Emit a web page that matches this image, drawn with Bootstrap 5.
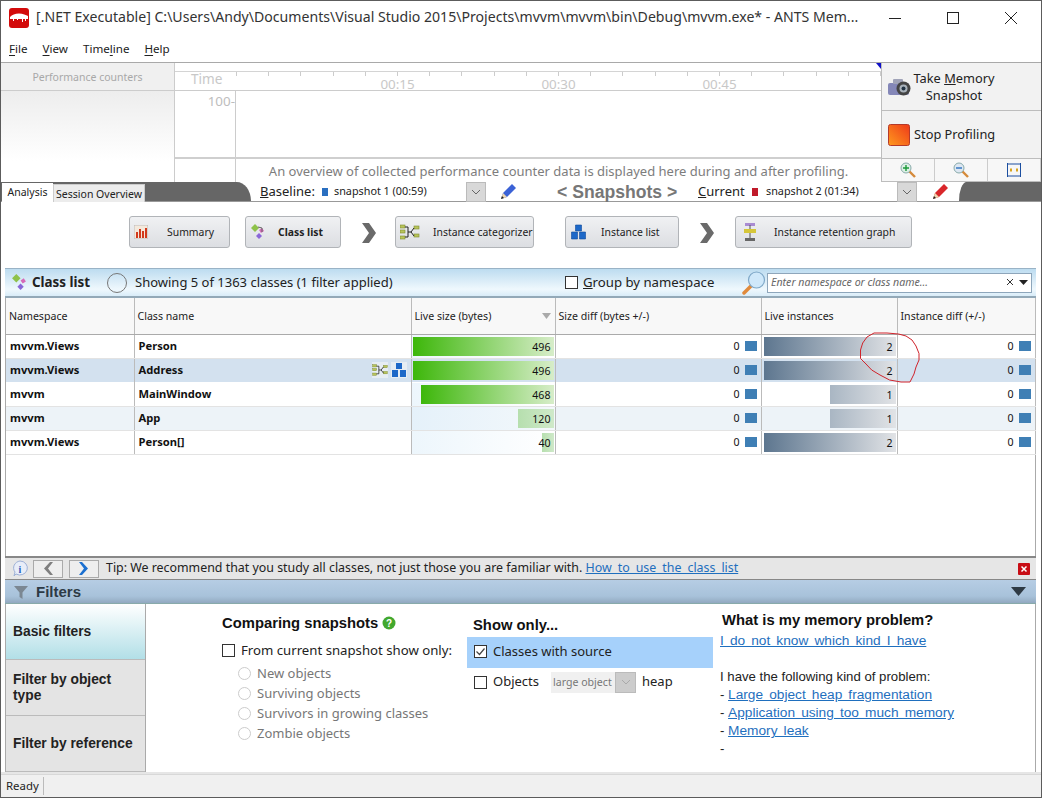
<!DOCTYPE html>
<html lang="en">
<head>
<meta charset="utf-8">
<title>ANTS Memory Profiler</title>
<link rel="stylesheet" href="https://cdn.jsdelivr.net/npm/bootstrap@5.3.0/dist/css/bootstrap.min.css">
<style>
html,body{margin:0;height:100%;background:#fff;overflow:hidden}
body{font-family:"Noto Sans","Open Sans",sans-serif;color:#222;font-size:13px;line-height:1.2}
.app-win{width:1042px;height:798px;border:1px solid #5c5c5c;position:relative;overflow:hidden;background:#fff}
.app-win>*{flex:none}
.title-bar{height:33px;padding-left:8px}
.title-text{font-size:14.1px;margin-left:7px;white-space:nowrap;width:830px;color:#333;flex:none}
.win-ctl{width:58px;text-align:center;flex:none}
.menu-bar{height:29px;padding:0 0 6px 8px;gap:15px;font-size:11.6px;color:#222;border-bottom:1px solid #a9a9a9;align-items:flex-end}
.menu-bar u{text-underline-offset:2px}
.top-panel{height:119px}
.pc-side{width:174px;flex:none;border-right:1px solid #ccc}
.pc-head{height:28px;background:#f0f0f0;border-bottom:1px solid #ccc;color:#a8a8a8;font-size:10.5px;padding-top:2px}
.pc-fill{height:70px;background:linear-gradient(#ededed,#fff)}
.chart-zone{flex:1 1 auto;min-width:0;position:relative}
.ruler-row{height:28px;border-bottom:1px solid #ccc;padding-top:8px}
.ruler-time{width:60px;flex:none;border-top:1px solid #d4d4d4;color:#c8c8c8;font-size:13.6px;padding:0 0 0 16px;line-height:13px}
.ruler-scale{flex:1 1 auto;border-top:1px solid #d4d4d4;background:repeating-linear-gradient(90deg,#ccc 0 1px,transparent 1px 32.2px) 1px 0/100% 4px no-repeat;padding-left:82px;color:#c8c8c8;font-size:13.4px;line-height:11px}
.ruler-lab{width:161px;flex:none;padding-top:7px;text-align:center}
.plot-row{height:66px}
.plot-y{width:61px;text-align:right;color:#bdbdbd;font-size:13.4px;padding-top:2px;line-height:16px;border-right:1px solid #ccc}
.chart-note{height:25px;border-top:2px solid #cfcfcf}
.note-gut{width:61px;flex:none;border-right:1px solid #ccc}
.note-text{flex:1 1 auto;text-align:center;color:#7d7d7d;font-size:13px;line-height:16px;padding-top:4px;white-space:nowrap}
.action-col{width:160px;flex:none;border-left:1px solid #bdbdbd;background:#f2f2f2;color:#222}
.act-btn{border-bottom:1px solid #bdbdbd;font-size:12.8px;padding-left:6px;line-height:17px;height:48px}
.act-text{width:84px;white-space:nowrap}
.act-zoom{height:23px;background:#f7f7f7;border-bottom:1px solid #bdbdbd}
.act-zoom>div{flex:1 1 0;border-right:1px solid #ccc}
.marker{position:absolute;left:875px;top:62px;width:0;height:0;border-top:6px solid #1010c8;border-left:5px solid transparent}
.snap-strip{height:20px;background:#fff;border-bottom:1px solid #999}
.strip-left{width:235px;flex:none;background:#666}
.curve-l{width:15px;flex:none;background:#666;border-top-right-radius:15px 20px}
.curve-r{flex:1 1 auto;background:#666;border-top-left-radius:8px 20px}
.tab-on,.tab-off{font-size:10.5px;text-align:center;white-space:nowrap;flex:none}
.tab-on{width:51px;background:#fff;padding-top:3px;margin-top:1px;height:19px;margin-left:1px}
.tab-off{width:92px;background:#ececec;border:1px solid #ccc;border-bottom:0;padding-top:3px;margin-top:2px;height:18px}
.snap-mid{width:708px;background:#fff;flex:none}
.snap-lab{font-size:13px;color:#222;flex:none;white-space:nowrap}
.snap-val{font-size:10.8px;white-space:nowrap;flex:none}
.snap-drop{width:20px;height:20px;background:#d8d8d8;border:1px solid #bbb;flex:none}
.snap-title{font-family:"Liberation Sans",sans-serif;font-weight:700;font-size:17.6px;line-height:18px;color:#777;white-space:nowrap;width:121px;margin-left:40px;flex:none}
.main-zone{padding:0 5px 0 4px}
.step-row{height:66px;padding-top:14px;padding-left:124px}
.step-btn{height:32px;background:linear-gradient(#f0f1f3,#dcdee2);border:1px solid #b1b4b8;border-radius:3px;font-size:10.4px;color:#222;padding:0 4px;flex:none}
.step-ico{width:33px;flex:none;display:flex;align-items:center}
.step-ico-s{width:28px}
.step-lab{white-space:nowrap}
.step-arrow{flex:none;margin-top:7px}
.list-head{height:30px;background:linear-gradient(#bddcf0,#eff8fd 75%,#d9ecf8);border-top:1px solid #9ab3c6;border-bottom:2px solid #93a9b8;padding-left:6px;width:1031px}
.list-title{font-size:13.4px;font-weight:700;margin-left:4px;width:66px;white-space:nowrap;color:#222;flex:none}
.list-info{font-size:13px;white-space:nowrap;margin-left:8px;width:430px;flex:none}
.spin-ring{width:20px;height:20px;border:1px solid #777;border-radius:50%;flex:none;margin-left:9px}
.group-lab{font-size:13.2px;white-space:nowrap;margin-left:5px;width:159px;flex:none}
.flat-check{width:13px!important;height:13px!important;margin:0!important;border:1px solid #333!important;border-radius:0!important;flex:none;float:none!important;box-shadow:none!important}
.flat-check:checked{background-color:#fff!important;background-image:url("data:image/svg+xml,%3csvg xmlns='http://www.w3.org/2000/svg' viewBox='0 0 13 13'%3e%3cpath d='M2.5 6.5l3 3 5-6' fill='none' stroke='%23444' stroke-width='1.2'/%3e%3c/svg%3e")!important;background-size:13px!important}
.flat-radio{width:13px!important;height:13px!important;margin:0!important;border:1px solid #ccc!important;opacity:1!important;flex:none;float:none!important;background:#fff}
.search-box{width:265px;flex:none;height:20px;background:#fff;border:1px solid #8ea6bb;font-size:10.6px;font-style:italic;color:#666;padding:0 3px;margin-left:1px}
.grid-wrap{width:1031px;height:258px;border-left:1px solid #aaa;border-right:1px solid #aaa;position:relative}
.data-grid{table-layout:fixed;width:1029px;border-collapse:collapse;margin:0;font-size:11px}
.data-grid th{font-weight:400;height:36px;background:#f8f8f8;border-bottom:1px solid #aaa;border-right:1px solid #bbb;padding:1px 0 0 3px;font-size:10.6px;color:#222;white-space:nowrap;vertical-align:middle}
.data-grid td{height:24px;padding:0;border:0;border-bottom:1px solid #e3e3e3;border-right:1px solid #bbb;vertical-align:middle;white-space:nowrap;color:#111}
.data-grid tr.row-sel td{background:#d3e1ef;border-top:1px dotted #fff;border-bottom:1px dotted #fff}
.data-grid tr.row-alt td{background:#edf3f8}
.txt-cell{font-weight:700;padding-left:4px!important;font-size:11.2px}
.cell-in{height:23px;padding:2px 1px;position:relative}
.bar-fill{height:19px;flex:none}
.cell-size{background:linear-gradient(90deg,#edf6fc,#fff)}
.row-alt .cell-size{background:linear-gradient(90deg,#e5f1fa,#f3f8fb)}
.bar-green{background:linear-gradient(90deg,#3db70a,#d7edc9)}
.bar-slate{background:linear-gradient(90deg,#5d768f,#e1e3e6)}
.bar-soft{background:linear-gradient(90deg,#a9b6c3,#e1e3e6)}
.bar-pale{background:linear-gradient(90deg,#b6dfae,#cfe9c9)}
.bar-num{position:absolute;right:4px;top:4px;font-size:10.6px;line-height:16px}
.num-wrap{padding-right:4px;gap:5px;font-size:10.6px}
.mini-sq{width:12px;height:10px;background:#3f7fb5;flex:none}
.row-icons{gap:3px;padding-right:4px}
.row-icons svg{background:#e6edf3}
.red-loop{position:absolute;left:853px;top:34px;pointer-events:none}
.tip-bar{height:24px;background:#e6e6e6;border-top:2px solid #888;border-bottom:1px solid #888;padding-left:6px;width:1031px;white-space:nowrap}
.nav-sq{width:30px;height:18px;background:#eee;border:1px solid #aaa;flex:none;margin-right:6px}
.tip-msg{margin-left:1px;width:912px;font-size:12.4px;color:#222;flex:none}
.tip-msg a,.help-col a{color:#1f6fbe;word-spacing:2.8px;text-decoration:underline}
.filter-head{height:24px;background:linear-gradient(#b6cde4,#a8c2da 70%,#92a9c0);border-bottom:1px solid #8aa;width:1031px;padding:0 9px 0 9px;font-family:"Liberation Sans",sans-serif;font-weight:700;font-size:15px;color:#2d3a45}
.filter-body{height:168px;width:1031px;border-left:1px solid #aaa;border-right:1px solid #aaa}
.filter-tabs{width:140px;flex:none;border-right:1px solid #aaa;font-family:"Liberation Sans",sans-serif;font-weight:700;font-size:13.8px;color:#222;line-height:16px}
.ftab{height:56px;background:#e4e4e4;border-bottom:1px solid #bbb;padding-left:7px}
.ftab-on{background:linear-gradient(#fff,#b2dfe7)}
.fcols{padding-left:76px}
.fcol1{width:245px;flex:none;padding-top:10px}
.fcol2{width:246px;flex:none;padding-top:12px}
.fcol3{width:310px;flex:none;padding:7px 0 0 7px;font-family:"Liberation Sans",sans-serif;font-size:13.2px;line-height:18px}
.fhead{font-family:"Liberation Sans",sans-serif;font-weight:700;font-size:14.8px;color:#111;white-space:nowrap;line-height:18px}
.fline{font-size:13.2px;white-space:nowrap;gap:6px;color:#222}
.fradio{height:20px;gap:6px;padding-left:16px;color:#777;font-size:13px;white-space:nowrap}
.src-pick{background:#a6d1fb;height:31px;padding:0 0 2px 7px;gap:6px;margin-top:3px;font-size:13px}
.heap-line{height:28px;padding-left:7px;gap:6px;font-size:13px}
.heap-sel{width:85px;height:21px;background:#f0f0f0;font-size:10.6px;color:#777;padding-left:2px;margin:0 0 0 6px;flex:none}
.heap-sel i{display:flex;width:21px;height:21px;margin-left:auto;background:#ccc;border:1px solid #bbb;align-items:center;justify-content:center}
.help-list{margin-top:18px}
.help-col a{font-size:13.7px;word-spacing:2.3px}
.status-bar{height:23px;background:#f0f0f0;border-top:1px solid #d8d8d8;position:absolute;left:0;right:0;bottom:0;font-size:11.4px;padding-left:5px;box-shadow:0 -2px 0 #e6e6e6}
.status-cell{border-right:1px solid #bbb;width:38px;height:18px;line-height:18px}
</style>
</head>
<body>
<div class="app-win d-flex flex-column">

  <div class="title-bar d-flex align-items-center">
    <svg width="20" height="20" viewBox="0 0 20 20"><rect width="20" height="20" rx="3" fill="#d30b0b"/><path d="M1 9C3 7 6 5.500 10 5.500S17 7 19 8v3h-2v2h-1v-2h-2v3h-1v-3H9v1H8v-1H5v2H4v-2H1z" fill="#fff"/></svg>
    <div class="title-text">[.NET Executable] C:\Users\Andy\Documents\Visual Studio 2015\Projects\mvvm\mvvm\bin\Debug\mvvm.exe* - ANTS Mem...</div>
    <div class="win-ctl"><svg width="14" height="14"><path d="M1 7.500h12" stroke="#222"/></svg></div>
    <div class="win-ctl"><svg width="13" height="13"><rect x=".5" y=".5" width="11" height="11" fill="none" stroke="#222"/></svg></div>
    <div class="win-ctl"><svg width="14" height="14"><path d="M1 1l12 12M13 1L1 13" stroke="#222"/></svg></div>
  </div>

  <div class="menu-bar d-flex">
    <span><u>F</u>ile</span><span><u>V</u>iew</span><span>Time<u>l</u>ine</span><span><u>H</u>elp</span>
  </div>

  <div class="top-panel d-flex">
    <div class="pc-side">
      <div class="pc-head text-center d-flex align-items-center justify-content-center">Performance counters</div>
      <div class="pc-fill"></div>
    </div>
    <div class="chart-zone d-flex flex-column">
      <div class="ruler-row d-flex">
        <div class="ruler-time">Time</div>
        <div class="ruler-scale d-flex">
          <span class="ruler-lab">00:15</span><span class="ruler-lab">00:30</span><span class="ruler-lab">00:45</span>
        </div>
      </div>
      <div class="plot-row d-flex"><div class="plot-y">100-</div></div>
      <div class="chart-note d-flex">
        <div class="note-gut"></div>
        <div class="note-text">An overview of collected performance counter data is displayed here during and after profiling.</div>
      </div>
    </div>
    <div class="action-col d-flex flex-column">
      <div class="act-btn d-flex align-items-center">
        <svg width="24" height="20" viewBox="0 0 24 20" class="flex-shrink-0"><rect x="0" y="6" width="21" height="12" rx="2" fill="#8487b8"/><rect x="5" y="2" width="10" height="5" rx="1" fill="#a0a3b8"/><circle cx="15.500" cy="11.500" r="7" fill="#444"/><circle cx="15.500" cy="11.500" r="4" fill="#a9b2bb"/><circle cx="15.500" cy="11.500" r="2" fill="#234"/></svg>
        <div class="act-text text-center">Take <u>M</u>emory<br>Snapshot</div>
      </div>
      <div class="act-btn d-flex align-items-center">
        <svg width="22" height="22" viewBox="0 0 22 22" class="flex-shrink-0"><defs><linearGradient id="stopg" x1="1" y1="0" x2="0" y2="1"><stop offset="0" stop-color="#ee3a1a"/><stop offset="1" stop-color="#ff9a1e"/></linearGradient></defs><rect x=".5" y=".5" width="21" height="21" rx="2" fill="url(#stopg)" stroke="#b53a2a"/></svg>
        <div class="ms-1">Stop Profiling</div>
      </div>
      <div class="act-zoom d-flex">
        <div class="d-flex align-items-center justify-content-center"><svg width="16" height="16" viewBox="0 0 16 16"><path d="M9 9l6 6" stroke="#d58a3a" stroke-width="2.400"/><circle cx="6" cy="6" r="5" fill="#dcefe4" stroke="#8aa"/><path d="M3 6h6M6 3v6" stroke="#1b9a3a" stroke-width="1.400"/></svg></div>
        <div class="d-flex align-items-center justify-content-center"><svg width="16" height="16" viewBox="0 0 16 16"><path d="M9 9l6 6" stroke="#d58a3a" stroke-width="2.400"/><circle cx="6" cy="6" r="5" fill="#dde7f2" stroke="#8aa"/><path d="M3 6h6" stroke="#2a70c0" stroke-width="1.400"/></svg></div>
        <div class="d-flex align-items-center justify-content-center"><svg width="14" height="14" viewBox="0 0 14 14"><path d="M.5 0v14M13.500 0v14M.5 1h13M.5 13h13" stroke="#1c4fa0" fill="none"/><path d="M3 7h2M9 7h2" stroke="#d9a520" stroke-width="3"/></svg></div>
      </div>
    </div>
  </div>
  <div class="marker"></div>

  <div class="snap-strip d-flex">
    <div class="strip-left d-flex">
      <div class="tab-on">Analysis</div>
      <div class="tab-off">Session Overview</div>
    </div>
    <div class="curve-l"></div>
    <div class="snap-mid d-flex align-items-center">
      <span class="snap-lab" style="margin-left:9px;width:62px"><u>B</u>aseline:</span>
      <svg width="6" height="8" class="flex-shrink-0"><rect width="6" height="8" fill="#2a6fc0"/></svg>
      <span class="snap-val" style="width:132px;margin-left:6px">snapshot 1 (00:59)</span>
      <span class="snap-drop d-flex align-items-center justify-content-center"><svg width="10" height="6"><path d="M1 1l4 4 4-4" fill="none" stroke="#666"/></svg></span>
      <svg style="margin-left:13px" class="flex-shrink-0" width="18" height="18" viewBox="0 0 18 18"><path d="M2 16l2-6L13 1l4 4-9 9z" fill="#3b62d6"/><path d="M2 16l2-6 4 4z" fill="#eed7b0"/><path d="M2 16l1-3 2 2z" fill="#222"/></svg>
      <span class="snap-title">&lt; Snapshots &gt;</span>
      <span class="snap-lab" style="margin-left:20px;width:54px"><u>C</u>urrent</span>
      <svg width="6" height="8" class="flex-shrink-0"><rect width="6" height="8" fill="#c01a2a"/></svg>
      <span class="snap-val" style="width:131px;margin-left:8px">snapshot 2 (01:34)</span>
      <span class="snap-drop d-flex align-items-center justify-content-center"><svg width="10" height="6"><path d="M1 1l4 4 4-4" fill="none" stroke="#666"/></svg></span>
      <svg style="margin-left:14px" class="flex-shrink-0" width="18" height="18" viewBox="0 0 18 18"><path d="M2 16l2-6L13 1l4 4-9 9z" fill="#d9262a"/><path d="M2 16l2-6 4 4z" fill="#eed7b0"/><path d="M2 16l1-3 2 2z" fill="#222"/></svg>
    </div>
    <div class="curve-r"></div>
  </div>

  <div class="main-zone">
    <div class="step-row d-flex align-items-start">
      <div class="step-btn d-flex align-items-center" style="width:101px">
        <span class="step-ico"><svg width="14" height="14" viewBox="0 0 14 14"><rect width="14" height="14" fill="#f4e9dc" stroke="#bbb"/><path d="M3 13V7M6 13V4M9 13V6M12 13V3" stroke="#d23a1c" stroke-width="2"/></svg></span>
        <span class="step-lab">Summary</span>
      </div>
      <div class="step-btn d-flex align-items-center fw-bold" style="width:96px;margin-left:15px">
        <span class="step-ico step-ico-s"><svg width="16" height="16" viewBox="0 0 16 16"><path d="M1 4l4-4 4 4-4 4z" fill="#8ec24a"/><path d="M9 6l3-2 2 3-3 2z" fill="#d66ab8"/><path d="M6 12l3-3 3 3-3 3z" fill="#8a67d8"/><path d="M8 3l4 1v4" fill="none" stroke="#666"/></svg></span>
        <span class="step-lab">Class list</span>
      </div>
      <svg class="step-arrow" style="margin-left:20px;margin-right:18px" width="16" height="20" viewBox="0 0 16 20"><path d="M1 0l7 0 7 10-7 10H1l7-10z" fill="#6a6a6a"/></svg>
      <div class="step-btn d-flex align-items-center" style="width:139px">
        <span class="step-ico"><svg width="20" height="16" viewBox="0 0 20 16"><g fill="#b8c45a" stroke="#7d8a30" stroke-width=".6"><rect y="1" width="5" height="3"/><rect y="6" width="5" height="3"/><rect y="12" width="5" height="3"/><rect x="14" y="2" width="5" height="3"/><rect x="14" y="10" width="5" height="3"/></g><path d="M5 3h3v10H5M8 8h3M11 8l3-4M11 8l3 4" fill="none" stroke="#222"/></svg></span>
        <span class="step-lab">Instance categorizer</span>
      </div>
      <div class="step-btn d-flex align-items-center" style="width:114px;margin-left:31px">
        <span class="step-ico" style="width:31px"><svg width="17" height="16" viewBox="0 0 16 16"><path d="M5 1h6v6H5zM1 8h6v7H1zM9 8h6v7H9z" fill="#1d68c8" stroke="#0f4a9c" stroke-width=".6"/></svg></span>
        <span class="step-lab">Instance list</span>
      </div>
      <svg class="step-arrow" style="margin-left:20px;margin-right:20px" width="16" height="20" viewBox="0 0 16 20"><path d="M1 0l7 0 7 10-7 10H1l7-10z" fill="#6a6a6a"/></svg>
      <div class="step-btn d-flex align-items-center" style="width:177px">
        <span class="step-ico ps-1" style="width:34px"><svg width="12" height="18" viewBox="0 0 12 18"><rect x="1" width="10" height="3" fill="#a98bd2"/><path d="M6 2v14" stroke="#555"/><rect y="6" width="12" height="4" fill="#d5c63a"/><rect x="1" y="15" width="10" height="3" fill="#666"/></svg></span>
        <span class="step-lab">Instance retention graph</span>
      </div>
    </div>

    <div class="list-head d-flex align-items-center">
      <svg class="flex-shrink-0" width="17" height="17" viewBox="0 0 16 16"><path d="M1 4l4-4 4 4-4 4z" fill="#8ec24a"/><path d="M9 6l3-2 2 3-3 2z" fill="#d66ab8"/><path d="M6 12l3-3 3 3-3 3z" fill="#8a67d8"/></svg>
      <span class="list-title">Class list</span>
      <span class="spin-ring"></span>
      <span class="list-info">Showing 5 of 1363 classes (1 filter applied)</span>
      <input class="form-check-input flat-check" type="checkbox" aria-label="Group by namespace">
      <span class="group-lab"><u>G</u>roup by namespace</span>
      <svg class="flex-shrink-0" width="24" height="24" viewBox="0 0 24 24"><path d="M10 14l-8 8" stroke="#e08a3c" stroke-width="3.500" stroke-linecap="round"/><circle cx="14.500" cy="9" r="8" fill="#cfe8fa" stroke="#7fa8c8" stroke-width="1.200"/></svg>
      <div class="search-box d-flex align-items-center">
        <span class="flex-grow-1">Enter namespace or class name...</span>
        <svg width="9" height="9"><path d="M1 1l6 6M7 1L1 7" stroke="#333"/></svg>
        <svg class="ms-1" width="9" height="5"><path d="M0 0h9L4.500 5z" fill="#222"/></svg>
      </div>
    </div>

    <div class="grid-wrap">
      <table class="data-grid">
        <colgroup><col style="width:128px"><col style="width:277px"><col style="width:144px"><col style="width:206px"><col style="width:136px"><col style="width:138px"></colgroup>
        <thead><tr>
          <th>Namespace</th><th>Class name</th>
          <th><div class="d-flex justify-content-between align-items-center pe-1">Live size (bytes)<svg width="9" height="6"><path d="M0 0h9L4.500 6z" fill="#aaa"/></svg></div></th>
          <th>Size diff (bytes +/-)</th><th>Live instances</th><th>Instance diff (+/-)</th>
        </tr></thead>
        <tbody>
          <tr>
            <td class="txt-cell">mvvm.Views</td><td class="txt-cell">Person</td>
            <td><div class="cell-in cell-size d-flex justify-content-end"><div class="bar-fill bar-green" style="width:141px"></div><span class="bar-num">496</span></div></td>
            <td><div class="num-wrap d-flex justify-content-end align-items-center">0<span class="mini-sq"></span></div></td>
            <td><div class="cell-in d-flex justify-content-end"><div class="bar-fill bar-slate" style="width:132px"></div><span class="bar-num">2</span></div></td>
            <td><div class="num-wrap d-flex justify-content-end align-items-center">0<span class="mini-sq"></span></div></td>
          </tr>
          <tr class="row-sel">
            <td class="txt-cell">mvvm.Views</td>
            <td><div class="d-flex align-items-center justify-content-between"><span class="txt-cell">Address</span><span class="row-icons d-flex align-items-center">
              <svg width="16" height="16" viewBox="-1 -1 21 18"><g fill="#b8c45a" stroke="#7d8a30" stroke-width=".6"><rect y="1" width="5" height="3"/><rect y="6" width="5" height="3"/><rect y="12" width="5" height="3"/><rect x="14" y="2" width="5" height="3"/><rect x="14" y="10" width="5" height="3"/></g><path d="M5 3h3v10H5M8 8h3M11 8l3-4M11 8l3 4" fill="none" stroke="#222"/></svg>
              <svg width="16" height="16" viewBox="0 0 16 16"><path d="M5 1h6v6H5zM1 8h6v7H1zM9 8h6v7H9z" fill="#1d68c8"/></svg>
            </span></div></td>
            <td><div class="cell-in d-flex justify-content-end"><div class="bar-fill bar-green" style="width:141px"></div><span class="bar-num">496</span></div></td>
            <td><div class="num-wrap d-flex justify-content-end align-items-center">0<span class="mini-sq"></span></div></td>
            <td><div class="cell-in d-flex justify-content-end"><div class="bar-fill bar-slate" style="width:132px"></div><span class="bar-num">2</span></div></td>
            <td><div class="num-wrap d-flex justify-content-end align-items-center">0<span class="mini-sq"></span></div></td>
          </tr>
          <tr>
            <td class="txt-cell">mvvm</td><td class="txt-cell">MainWindow</td>
            <td><div class="cell-in cell-size d-flex justify-content-end"><div class="bar-fill bar-green" style="width:133px"></div><span class="bar-num">468</span></div></td>
            <td><div class="num-wrap d-flex justify-content-end align-items-center">0<span class="mini-sq"></span></div></td>
            <td><div class="cell-in d-flex justify-content-end"><div class="bar-fill bar-soft" style="width:66px"></div><span class="bar-num">1</span></div></td>
            <td><div class="num-wrap d-flex justify-content-end align-items-center">0<span class="mini-sq"></span></div></td>
          </tr>
          <tr class="row-alt">
            <td class="txt-cell">mvvm</td><td class="txt-cell">App</td>
            <td><div class="cell-in cell-size d-flex justify-content-end"><div class="bar-fill bar-pale" style="width:36px"></div><span class="bar-num">120</span></div></td>
            <td><div class="num-wrap d-flex justify-content-end align-items-center">0<span class="mini-sq"></span></div></td>
            <td><div class="cell-in d-flex justify-content-end"><div class="bar-fill bar-soft" style="width:66px"></div><span class="bar-num">1</span></div></td>
            <td><div class="num-wrap d-flex justify-content-end align-items-center">0<span class="mini-sq"></span></div></td>
          </tr>
          <tr>
            <td class="txt-cell">mvvm.Views</td><td class="txt-cell">Person[]</td>
            <td><div class="cell-in cell-size d-flex justify-content-end"><div class="bar-fill bar-pale" style="width:12px"></div><span class="bar-num">40</span></div></td>
            <td><div class="num-wrap d-flex justify-content-end align-items-center">0<span class="mini-sq"></span></div></td>
            <td><div class="cell-in d-flex justify-content-end"><div class="bar-fill bar-slate" style="width:132px"></div><span class="bar-num">2</span></div></td>
            <td><div class="num-wrap d-flex justify-content-end align-items-center">0<span class="mini-sq"></span></div></td>
          </tr>
        </tbody>
      </table>
      <svg class="red-loop" width="62" height="52" viewBox="0 0 62 52"><path d="M15 1L28 1 39.500 2 47 4 53 8 57 14 60 21.500 60 28 57 35 55 42 51 50 42 50 30.600 48 21 43 12.700 38 7 32 1.500 26.500 1.500 18 3.700 11 8 5Z" fill="none" stroke="#d0232b"/></svg>
    </div>

    <div class="tip-bar d-flex align-items-center">
      <svg class="flex-shrink-0" style="margin-right:4px" width="18" height="18" viewBox="0 0 18 18"><path d="M9 1a7.500 7 0 1 1-4 13l-2 2 1-4A7.500 7 0 0 1 9 1z" fill="#e8edf8" stroke="#9db0d6"/><text x="9" y="12.500" font-size="10" font-weight="700" text-anchor="middle" fill="#2a5fc0" font-family="Liberation Serif">i</text></svg>
      <span class="nav-sq d-flex align-items-center justify-content-center"><svg width="10" height="13" viewBox="0 0 10 13"><path d="M7 0h3L5 6.500 10 13H7L1 6.500z" fill="#7f7f7f"/></svg></span>
      <span class="nav-sq d-flex align-items-center justify-content-center"><svg width="10" height="13" viewBox="0 0 10 13"><path d="M3 0H0l5 6.500L0 13h3l6-6.500z" fill="#1a6fd0"/></svg></span>
      <span class="tip-msg">Tip: We recommend that you study all classes, not just those you are familiar with. <a href="#">How to use the class list</a></span>
      <svg class="flex-shrink-0" width="12" height="12" viewBox="0 0 12 12"><rect width="12" height="12" rx="1" fill="#c80d15"/><path d="M3.500 3.500l5 5M8.500 3.500l-5 5" stroke="#fff" stroke-width="1.500"/></svg>
    </div>

    <div class="filter-head d-flex align-items-center">
      <svg class="me-1" width="14" height="14" viewBox="0 0 14 14"><path d="M0 1h14L8.500 7.500V14l-3-2V7.500z" fill="#7b8792"/></svg>
      <span class="flex-grow-1 ms-1">Filters</span>
      <svg width="15" height="9" style="margin-right:1px"><path d="M0 0h15L7.500 9z" fill="#2e3a44"/></svg>
    </div>

    <div class="filter-body d-flex">
      <div class="filter-tabs">
        <div class="ftab ftab-on d-flex align-items-center">Basic filters</div>
        <div class="ftab d-flex align-items-center"><span>Filter by object<br>type</span></div>
        <div class="ftab d-flex align-items-center">Filter by reference</div>
      </div>
      <div class="fcols d-flex">
        <div class="fcol1">
          <div class="fhead d-flex align-items-center gap-1">Comparing snapshots <svg width="14" height="14" viewBox="0 0 14 14"><circle cx="7" cy="7" r="6.500" fill="#42a82e"/><text x="7" y="11" text-anchor="middle" font-size="10" font-weight="700" fill="#fff" font-family="Liberation Sans">?</text></svg></div>
          <div class="fline d-flex align-items-center" style="margin:11px 0 5px">
            <input class="form-check-input flat-check" type="checkbox" aria-label="From current snapshot show only">From current snapshot show only:
          </div>
          <div class="fradio d-flex align-items-center"><input class="form-check-input flat-radio" type="radio" disabled aria-label="New objects">New objects</div>
          <div class="fradio d-flex align-items-center"><input class="form-check-input flat-radio" type="radio" disabled aria-label="Surviving objects">Surviving objects</div>
          <div class="fradio d-flex align-items-center"><input class="form-check-input flat-radio" type="radio" disabled aria-label="Survivors in growing classes">Survivors in growing classes</div>
          <div class="fradio d-flex align-items-center"><input class="form-check-input flat-radio" type="radio" disabled aria-label="Zombie objects">Zombie objects</div>
        </div>
        <div class="fcol2">
          <div class="fhead" style="padding-left:6px">Show only...</div>
          <div class="src-pick d-flex align-items-center"><input class="form-check-input flat-check" type="checkbox" checked aria-label="Classes with source">Classes with source</div>
          <div class="heap-line d-flex align-items-center"><input class="form-check-input flat-check" type="checkbox" aria-label="Objects">Objects
            <span class="heap-sel d-flex align-items-center">large object<i><svg width="10" height="6"><path d="M1 1l4 4 4-4" fill="none" stroke="#aaa"/></svg></i></span>heap
          </div>
        </div>
        <div class="fcol3 help-col">
          <div class="fhead" style="padding-left:2px">What is my memory problem?</div>
          <div style="margin-top:3px"><a href="#">I do not know which kind I have</a></div>
          <div class="help-list">I have the following kind of problem:</div>
          <div>- <a href="#">Large object heap fragmentation</a></div>
          <div>- <a href="#">Application using too much memory</a></div>
          <div>- <a href="#">Memory leak</a></div>
          <div>-</div>
        </div>
      </div>
    </div>
  </div>

  <div class="status-bar d-flex align-items-center"><div class="status-cell">Ready</div></div>
</div>
<script src="https://cdn.jsdelivr.net/npm/bootstrap@5.3.0/dist/js/bootstrap.bundle.min.js"></script>
</body>
</html>
